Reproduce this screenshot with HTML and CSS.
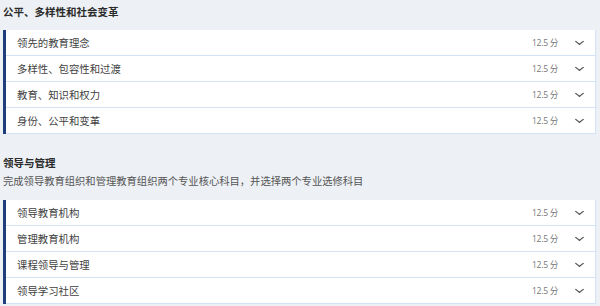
FILE: index.html
```html
<!DOCTYPE html>
<html lang="zh">

<head>
    <meta charset="UTF-8">
    <meta name="viewport" content="width=device-width, initial-scale=1.0">
    <title>课程结构</title>
    <link rel="stylesheet" href="styles.css">
</head>

<body>
    <div class="section">
        <h2 class="section-title">公平、多样性和社会变革</h2>
        <ul class="units">
            <li class="unit"><span class="unit-name">领先的教育理念</span><span class="unit-meta">12.5 分</span><span class="chev"></span></li>
            <li class="unit"><span class="unit-name">多样性、包容性和过渡</span><span class="unit-meta">12.5 分</span><span class="chev"></span></li>
            <li class="unit"><span class="unit-name">教育、知识和权力</span><span class="unit-meta">12.5 分</span><span class="chev"></span></li>
            <li class="unit"><span class="unit-name">身份、公平和变革</span><span class="unit-meta">12.5 分</span><span class="chev"></span></li>
        </ul>
    </div>

    <div class="section second">
        <h2 class="section-title">领导与管理</h2>
        <p class="section-desc">完成领导教育组织和管理教育组织两个专业核心科目，并选择两个专业选修科目</p>
        <ul class="units">
            <li class="unit"><span class="unit-name">领导教育机构</span><span class="unit-meta">12.5 分</span><span class="chev"></span></li>
            <li class="unit"><span class="unit-name">管理教育机构</span><span class="unit-meta">12.5 分</span><span class="chev"></span></li>
            <li class="unit"><span class="unit-name">课程领导与管理</span><span class="unit-meta">12.5 分</span><span class="chev"></span></li>
            <li class="unit"><span class="unit-name">领导学习社区</span><span class="unit-meta">12.5 分</span><span class="chev"></span></li>
        </ul>
    </div>
</body>

</html>
```

FILE: styles.css
```css
body {
    font-family: "Noto Sans CJK SC", "Open Sans", sans-serif;
    margin: 0;
    padding: 0 4px 0 3px;
    background-color: #edf1f5;
    color: #333;
}

.section-title {
    font-size: 10.5px;
    font-weight: bold;
    line-height: 14px;
    margin: 0;
    padding-top: 5px;
    color: #2b2b2b;
}

.second .section-title {
    padding-top: 22px;
}

.section-desc {
    font-size: 10.3px;
    line-height: 14px;
    margin: 4px 0 0;
    color: #555;
}

.units {
    list-style: none;
    margin: 11px 0 0;
    padding: 0;
    border-left: 3px solid #1f3f7c;
}

.second .units {
    margin-top: 12px;
}

.unit {
    display: flex;
    align-items: center;
    height: 25px;
    padding: 0 13px 0 11px;
    background: white;
    border-bottom: 1px solid #d3e3f5;
    border-right: 1px solid #d3e3f5;
}

.unit-name {
    flex: 1;
    font-size: 10.4px;
    color: #3f3f3f;
}

.unit-meta {
    font-family: "Open Sans", "Noto Sans CJK SC", sans-serif;
    font-size: 8.6px;
    color: #777;
    letter-spacing: -0.3px;
}

.chev {
    width: 4px;
    height: 4px;
    margin: 0 0 3px 19px;
    border-right: 1.5px solid #555;
    border-bottom: 1.5px solid #555;
    transform: scaleX(1.3) rotate(45deg);
}
```
